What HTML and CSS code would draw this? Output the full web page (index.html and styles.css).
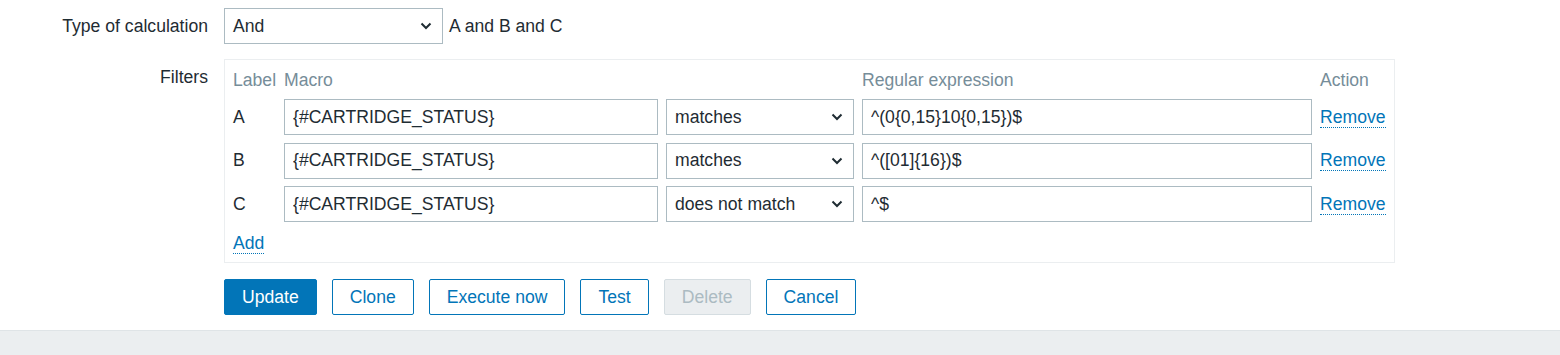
FILE: index.html
```html
<!DOCTYPE html>
<html lang="en">
<head>
    <meta charset="UTF-8">
    <title>Discovery rule - Filters</title>
    <link rel="stylesheet" href="styles.css">
</head>
<body>
    <div class="form">
        <!-- Type of calculation -->
        <label class="form-label">Type of calculation</label>
        <div class="form-field inline">
            <div class="select calc-select">
                <span>And</span>
                <svg class="chevron" width="12" height="8" viewBox="0 0 12 8"><polyline points="1.5,1.5 6,6 10.5,1.5" fill="none" stroke="#1f2c33" stroke-width="2"/></svg>
            </div>
            <span class="formula">A and B and C</span>
        </div>

        <!-- Filters -->
        <label class="form-label filters-label">Filters</label>
        <div class="filter-box">
            <div class="th">Label</div>
            <div class="th">Macro</div>
            <div class="th"></div>
            <div class="th">Regular expression</div>
            <div class="th">Action</div>

            <div class="cond-label">A</div>
            <input class="input" type="text" value="{#CARTRIDGE_STATUS}">
            <div class="select">
                <span>matches</span>
                <svg class="chevron" width="12" height="8" viewBox="0 0 12 8"><polyline points="1.5,1.5 6,6 10.5,1.5" fill="none" stroke="#1f2c33" stroke-width="2"/></svg>
            </div>
            <input class="input" type="text" value="^(0{0,15}10{0,15})$">
            <a class="link" href="#">Remove</a>

            <div class="cond-label">B</div>
            <input class="input" type="text" value="{#CARTRIDGE_STATUS}">
            <div class="select">
                <span>matches</span>
                <svg class="chevron" width="12" height="8" viewBox="0 0 12 8"><polyline points="1.5,1.5 6,6 10.5,1.5" fill="none" stroke="#1f2c33" stroke-width="2"/></svg>
            </div>
            <input class="input" type="text" value="^([01]{16})$">
            <a class="link" href="#">Remove</a>

            <div class="cond-label">C</div>
            <input class="input" type="text" value="{#CARTRIDGE_STATUS}">
            <div class="select">
                <span>does not match</span>
                <svg class="chevron" width="12" height="8" viewBox="0 0 12 8"><polyline points="1.5,1.5 6,6 10.5,1.5" fill="none" stroke="#1f2c33" stroke-width="2"/></svg>
            </div>
            <input class="input" type="text" value="^$">
            <a class="link" href="#">Remove</a>

            <div class="add-row"><a class="link" href="#">Add</a></div>
        </div>

        <!-- Buttons -->
        <div></div>
        <div class="buttons">
            <button class="btn btn-primary">Update</button>
            <button class="btn btn-alt">Clone</button>
            <button class="btn btn-alt">Execute now</button>
            <button class="btn btn-alt">Test</button>
            <button class="btn btn-disabled" disabled>Delete</button>
            <button class="btn btn-alt">Cancel</button>
        </div>
    </div>

    <footer class="footer"></footer>
</body>
</html>
```

FILE: styles.css
```css
* {
    margin: 0;
    padding: 0;
    box-sizing: border-box;
}

body {
    font-family: 'Liberation Sans', Arial, sans-serif;
    font-size: 17.6px;
    color: #1f2c33;
    background: #fff;
}

.form {
    display: grid;
    grid-template-columns: 208px 1fr;
    column-gap: 16px;
    row-gap: 15px;
    padding-top: 8px;
}

.form-label {
    text-align: right;
    line-height: 36px;
}

.filters-label {
    line-height: 24px;
    padding-top: 6px;
}

.form-field.inline {
    display: flex;
    align-items: center;
    gap: 6px;
}

.select {
    display: flex;
    align-items: center;
    justify-content: space-between;
    height: 36px;
    padding: 0 8px 0 8px;
    border: 1px solid #acbbc2;
    background: #fff;
    white-space: nowrap;
}

.calc-select {
    width: 219px;
}

.chevron {
    flex-shrink: 0;
    margin-right: 2px;
}

.filter-box {
    justify-self: start;
    display: grid;
    grid-template-columns: 43px 374px 188px 450px 66px;
    column-gap: 8px;
    row-gap: 7.5px;
    padding: 7.5px 8px 7.5px 8px;
    border: 1px solid #ebeef0;
}

.th {
    color: #768d99;
    line-height: 24px;
    white-space: nowrap;
}

.cond-label {
    align-self: center;
}

.input {
    height: 36px;
    width: 100%;
    padding: 0 8px;
    border: 1px solid #acbbc2;
    font: inherit;
    color: #1f2c33;
    outline: none;
}

.link {
    align-self: center;
    justify-self: start;
    color: #0275b8;
    text-decoration: none;
    border-bottom: 1px dotted #0275b8;
    line-height: 20px;
}

.add-row {
    grid-column: 1 / -1;
    height: 25px;
    padding-top: 2px;
    display: flex;
    align-items: flex-start;
}

.buttons {
    display: flex;
    gap: 15px;
    margin-top: 1px;
}

.btn {
    height: 36px;
    padding: 0 17px;
    border: 1px solid #0275b8;
    border-radius: 2px;
    font: inherit;
    cursor: pointer;
}

.btn-primary {
    background: #0275b8;
    color: #fff;
}

.btn-alt {
    background: #fff;
    color: #0275b8;
}

.btn-disabled {
    background: #ebeef0;
    border-color: #d5dde1;
    color: #acbbc2;
    cursor: default;
}

.footer {
    margin-top: 15px;
    height: 60px;
    background: #ebeef0;
    border-top: 1px solid #dfe4e7;
}
```
